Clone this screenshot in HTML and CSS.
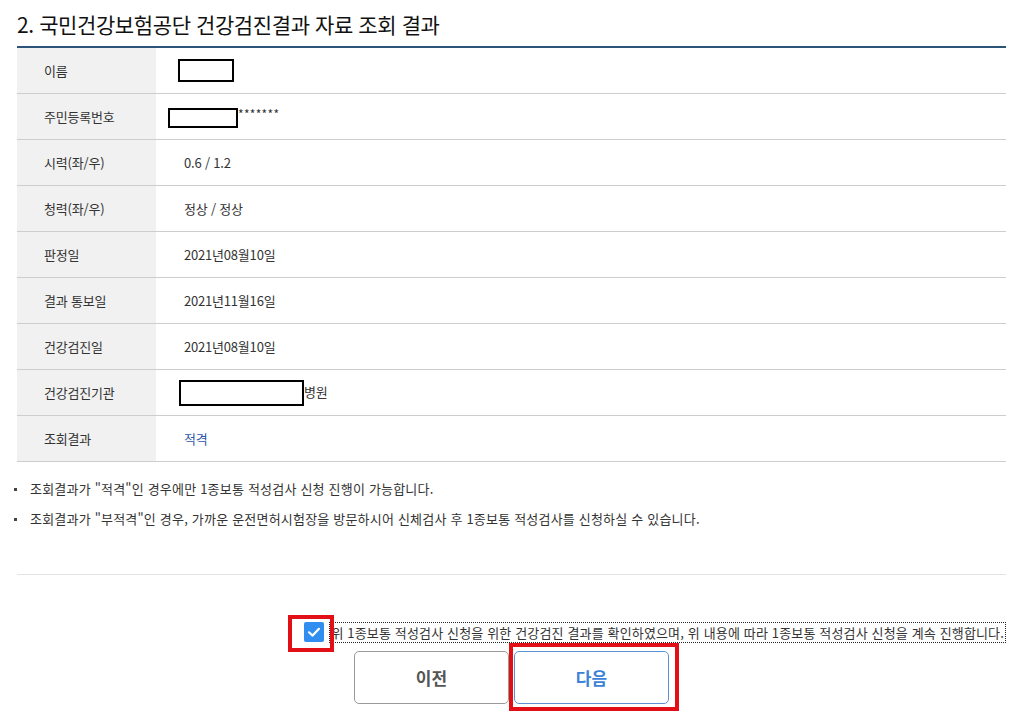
FILE: index.html
```html
<!DOCTYPE html>
<html lang="ko">
<head>
    <meta charset="UTF-8">
    <title>건강검진결과 자료 조회 결과</title>
    <link rel="stylesheet" href="styles.css">
</head>
<body>
    <div class="wrap">
        <h2 class="sec-title">2. 국민건강보험공단 건강검진결과 자료 조회 결과</h2>

        <table class="info-table">
            <tr>
                <th>이름</th>
                <td><span class="mask mask-name"></span></td>
            </tr>
            <tr>
                <th>주민등록번호</th>
                <td class="td-tight"><span class="mask mask-id"></span><span class="stars">*******</span></td>
            </tr>
            <tr>
                <th>시력(좌/우)</th>
                <td>0.6 / 1.2</td>
            </tr>
            <tr>
                <th>청력(좌/우)</th>
                <td>정상 / 정상</td>
            </tr>
            <tr>
                <th>판정일</th>
                <td>2021년08월10일</td>
            </tr>
            <tr>
                <th>결과 통보일</th>
                <td>2021년11월16일</td>
            </tr>
            <tr>
                <th>건강검진일</th>
                <td>2021년08월10일</td>
            </tr>
            <tr>
                <th>건강검진기관</th>
                <td class="td-org"><span class="mask mask-org"></span>병원</td>
            </tr>
            <tr>
                <th>조회결과</th>
                <td class="result">적격</td>
            </tr>
        </table>

        <ul class="notice">
            <li>조회결과가 "적격"인 경우에만 1종보통 적성검사 신청 진행이 가능합니다.</li>
            <li>조회결과가 "부적격"인 경우, 가까운 운전면허시험장을 방문하시어 신체검사 후 1종보통 적성검사를 신청하실 수 있습니다.</li>
        </ul>

        <div class="divider"></div>

        <div class="agree">
            <span class="chk">
                <svg width="20" height="20" viewBox="0 0 20 20"><rect width="20" height="20" rx="2" fill="#2f8ef0"/><path d="M5 10.3 L8.6 13.6 L15 6.8" fill="none" stroke="#fff" stroke-width="2.2" stroke-linecap="round" stroke-linejoin="round"/></svg>
                <span class="mark mark-chk"></span>
            </span>
            <label class="agree-text">위 1종보통 적성검사 신청을 위한 건강검진 결과를 확인하였으며, 위 내용에 따라 1종보통 적성검사 신청을 계속 진행합니다.</label>
        </div>

        <div class="btns">
            <button class="btn btn-prev">이전</button>
            <span class="btn-hl">
                <button class="btn btn-next">다음</button>
                <span class="mark mark-next"></span>
            </span>
        </div>
    </div>
</body>
</html>
```

FILE: styles.css
```css
body {
    margin: 0;
    padding: 0;
    font-family: 'Noto Sans CJK KR', 'Noto Sans', sans-serif;
    color: #333;
    background: #fff;
}
.wrap {
    width: 989px;
    padding: 0 0 14px 17px;
}
.sec-title {
    margin: 0;
    padding-top: 10px;
    height: 36px;
    font-size: 21px;
    font-weight: 400;
    letter-spacing: -0.4px;
    color: #111;
    line-height: 28px;
    border-bottom: 2px solid #2b5478;
}
.info-table {
    width: 100%;
    border-collapse: collapse;
    font-size: 13px;
    letter-spacing: -0.2px;
}
.info-table th,
.info-table td {
    height: 45px;
    padding: 0;
    border-bottom: 1px solid #cdcdcd;
    font-weight: 400;
    text-align: left;
    vertical-align: middle;
}
.info-table th {
    width: 139px;
    padding-left: 27px;
    box-sizing: border-box;
    background: #f1f1f1;
    color: #333;
}
.info-table td {
    padding-left: 28px;
    color: #333;
}
.info-table td.td-tight {
    padding-left: 12px;
}
.info-table td.td-org {
    padding-left: 23px;
}
.info-table td.result {
    color: #2b57a6;
}
.mask {
    display: inline-block;
    vertical-align: middle;
    border: 2px solid #000;
    box-sizing: border-box;
}
.mask-name {
    width: 56px;
    height: 23px;
    margin-left: -6px;
}
.mask-id {
    width: 70px;
    height: 20px;
    margin-top: -4px;
}
.mask-org {
    width: 125px;
    height: 26px;
}
.stars {
    vertical-align: 4px;
    font-size: 12px;
    letter-spacing: 0.3px;
}
.notice {
    list-style: none;
    margin: 0;
    padding: 17px 0 0 0;
    font-size: 13px;
    letter-spacing: 0.2px;
    color: #333;
}
.notice li {
    position: relative;
    height: 20px;
    padding-left: 13px;
    line-height: 20px;
    margin-bottom: 10px;
}
.notice li::before {
    content: '';
    position: absolute;
    left: -3px;
    top: 9px;
    width: 3px;
    height: 3px;
    background: #444;
}
.divider {
    margin-top: 45px;
    border-top: 1px solid #e4e4e4;
}
.agree {
    display: flex;
    justify-content: flex-end;
    align-items: center;
    margin-top: 46px;
    height: 22px;
}
.chk {
    position: relative;
    display: flex;
    margin-right: 5px;
}
.agree-text {
    font-size: 13px;
    letter-spacing: 0.15px;
    line-height: 19px;
    padding: 0 1px;
    border: 1px dotted #222;
    color: #333;
}
.btns {
    display: flex;
    justify-content: center;
    gap: 5px;
    margin-top: 8px;
}
.btn {
    width: 155px;
    height: 53px;
    font-family: 'Noto Sans CJK KR', sans-serif;
    font-size: 17px;
    font-weight: 700;
    background: #fff;
    border-radius: 5px;
    box-sizing: border-box;
}
.btn-prev {
    border: 1px solid #9a9a9a;
    color: #555;
}
.btn-next {
    border: 1px solid #5d93d6;
    color: #3d82d9;
}
.btn-hl {
    position: relative;
    display: flex;
}
/* red annotation boxes */
.mark {
    position: absolute;
    border: 4px solid #e20f16;
    pointer-events: none;
}
.mark-chk {
    left: -16px;
    top: -7px;
    width: 38px;
    height: 29px;
}
.mark-next {
    left: -5px;
    top: -8px;
    width: 162px;
    height: 60px;
}
```
